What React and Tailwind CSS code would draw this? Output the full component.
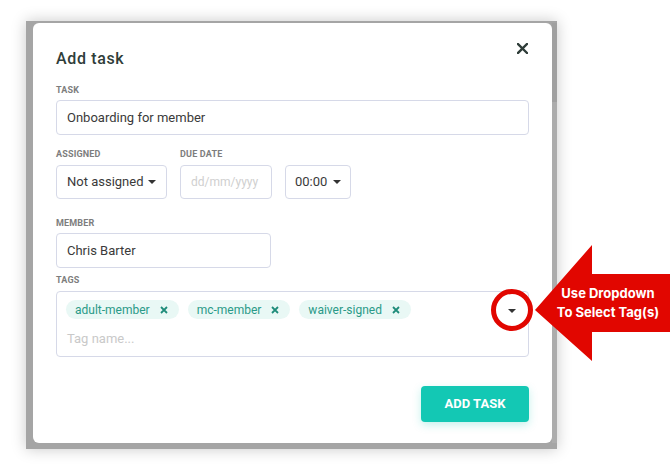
import React from "react";

const tags = ["adult-member", "mc-member", "waiver-signed"];

function Caret({ className = "" }) {
  return (
    <svg width="8" height="4" viewBox="0 0 8 4" className={className}>
      <path d="M0 0h8L4 4z" fill="#333" />
    </svg>
  );
}

function Label({ children, className = "" }) {
  return (
    <div className={`h-[12px] text-[9px] leading-[12px] font-bold uppercase tracking-[0.02em] text-[#7d7d7d] ${className}`}>
      {children}
    </div>
  );
}

export default function App() {
  return (
    <div className="relative w-[670px] h-[470px] overflow-hidden bg-white font-['Roboto',sans-serif]">
      <div className="pl-[26px] pt-[21px]">
        {/* window frame */}
        <div className="flex w-[531px] h-[428px] bg-[#a5a5a5] pl-[7px] pt-[2px] pb-[6px] shadow-[0_0_14px_rgba(0,0,0,0.22)]">
          <div className="relative flex-1 rounded-[6px] bg-white px-[23px] pt-[26px]">
            <h1 className="h-[20px] text-[16px] leading-[20px] font-medium tracking-[0.04em] text-[#2f3d39]">
              Add task
            </h1>
            <button className="absolute right-[24px] top-[20px] w-[11px] h-[11px]" aria-label="Close">
              <svg viewBox="0 0 11 11" width="11" height="11">
                <path d="M1 1l9 9M10 1l-9 9" stroke="#2f3d39" strokeWidth="2.4" strokeLinecap="square" />
              </svg>
            </button>

            <Label className="mt-[15px]">Task</Label>
            <div className="mt-[4px] flex h-[35px] items-center rounded-[4px] border border-[#d6d9e8] px-[10px] text-[13px] text-[#3a3a3a]">
              Onboarding for member
            </div>

            <div className="mt-[13px] flex gap-[13px]">
              <div className="w-[111px]">
                <Label>Assigned</Label>
                <div className="mt-[5px] flex h-[34px] items-center justify-between rounded-[4px] border border-[#d6d9e8] pl-[10px] pr-[10px] text-[13px] text-[#3a3a3a]">
                  Not assigned
                  <Caret />
                </div>
              </div>
              <div className="w-[92px]">
                <Label>Due date</Label>
                <div className="mt-[5px] flex h-[34px] items-center rounded-[4px] border border-[#d6d9e8] px-[10px] text-[12px] text-[#cfcfcf]">
                  dd/mm/yyyy
                </div>
              </div>
              <div className="w-[66px]">
                <Label>&nbsp;</Label>
                <div className="mt-[5px] flex h-[34px] items-center justify-between rounded-[4px] border border-[#d6d9e8] pl-[9px] pr-[9px] text-[13px] text-[#3a3a3a]">
                  00:00
                  <Caret />
                </div>
              </div>
            </div>

            <Label className="mt-[18px]">Member</Label>
            <div className="mt-[4px] flex h-[35px] w-[215px] items-center rounded-[4px] border border-[#d6d9e8] px-[10px] text-[13px] text-[#3a3a3a]">
              Chris Barter
            </div>

            <Label className="mt-[6px]">Tags</Label>
            <div className="mt-[5px] flex h-[66px] rounded-[4px] border border-[#d6d9e8] pl-[9px] pr-[12px] pt-[8px]">
              <div className="flex-1">
                <div className="flex gap-[9px]">
                  {tags.map((t) => (
                    <span
                      key={t}
                      className="flex h-[19px] items-center gap-[10px] rounded-full bg-[#e9f8f5] pl-[9px] pr-[11px] text-[12px] text-[#2a9a88]"
                    >
                      {t}
                      <svg viewBox="0 0 8 8" width="8" height="8">
                        <path d="M1 1l6 6M7 1l-6 6" stroke="#1f8c7a" strokeWidth="1.8" />
                      </svg>
                    </span>
                  ))}
                </div>
                <div className="mt-[10px] pl-[1px] text-[13px] text-[#c9c9c9]">Tag name...</div>
              </div>
              <div className="pt-[9px]">
                <Caret />
              </div>
            </div>

            <div className="mt-[29px] flex justify-end">
              <button className="h-[36px] w-[108px] rounded-[4px] bg-[#13c8b4] text-[13px] font-bold uppercase text-white shadow-[0_3px_8px_rgba(19,200,180,0.25)]">
                Add task
              </button>
            </div>
          </div>
          {/* scrollbar */}
          <div className="flex w-[5px] flex-col">
            <div className="h-[79px] bg-[#a0a0a0]" />
            <div className="flex-1 bg-[#acacac]" />
          </div>
        </div>
      </div>

      {/* annotation overlay */}
      <div className="absolute left-[491px] top-[289px] h-[42px] w-[42px] rounded-full border-[5px] border-[#e10600]" />
      <svg className="absolute left-0 top-0" width="670" height="470" viewBox="0 0 670 470">
        <polygon points="535,310 592,245 592,274 670,274 670,332 592,332 592,361" fill="#e10600" />
      </svg>
      <div className="absolute left-[552px] top-[284px] w-[112px] text-center text-[13px] leading-[19px] font-bold text-white font-['Inter',sans-serif]">
        Use Dropdown
        <br />
        To Select Tag(s)
      </div>
    </div>
  );
}
